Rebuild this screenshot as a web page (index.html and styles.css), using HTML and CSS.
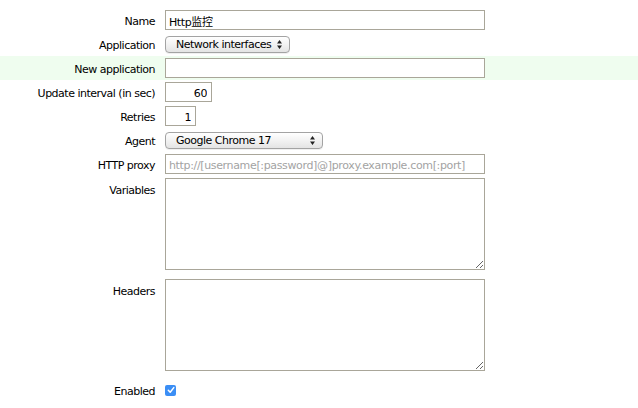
FILE: index.html
```html
<!DOCTYPE html>
<html>
<head>
<meta charset="utf-8">
<link rel="stylesheet" href="styles.css">
</head>
<body>
<div class="form">
  <div class="row">
    <label class="lbl">Name</label>
    <div class="field"><input class="text wide" type="text" value="Http监控"></div>
  </div>
  <div class="row">
    <label class="lbl">Application</label>
    <div class="field">
      <span class="select sel-app"><span class="sel-text">Network interfaces</span>
        <svg class="arrows" width="5" height="9" viewBox="0 0 5 9"><path d="M0 3.5 L2.5 0 L5 3.5 Z M0 5.5 L2.5 9 L5 5.5 Z" fill="#222"/></svg>
      </span>
    </div>
  </div>
  <div class="row hl">
    <label class="lbl">New application</label>
    <div class="field"><input class="text wide" type="text" value=""></div>
  </div>
  <div class="row">
    <label class="lbl">Update interval (in sec)</label>
    <div class="field"><input class="text num interval" type="text" value="60"></div>
  </div>
  <div class="row">
    <label class="lbl">Retries</label>
    <div class="field"><input class="text num retries" type="text" value="1"></div>
  </div>
  <div class="row">
    <label class="lbl">Agent</label>
    <div class="field">
      <span class="select sel-agent"><span class="sel-text">Google Chrome 17</span>
        <svg class="arrows" width="5" height="9" viewBox="0 0 5 9"><path d="M0 3.5 L2.5 0 L5 3.5 Z M0 5.5 L2.5 9 L5 5.5 Z" fill="#222"/></svg>
      </span>
    </div>
  </div>
  <div class="row">
    <label class="lbl">HTTP proxy</label>
    <div class="field"><input class="text wide proxy" type="text" placeholder="http://[username[:password]@]proxy.example.com[:port]"></div>
  </div>
  <div class="row tall">
    <label class="lbl">Variables</label>
    <div class="field"><textarea class="area"></textarea></div>
  </div>
  <div class="row tall">
    <label class="lbl">Headers</label>
    <div class="field"><textarea class="area"></textarea></div>
  </div>
  <div class="row">
    <label class="lbl">Enabled</label>
    <div class="field">
      <span class="check"><svg width="10" height="10" viewBox="0 0 10 10"><path d="M2.3 5.2 L4.2 7.2 L7.8 2.6" fill="none" stroke="#fff" stroke-width="1.5" stroke-linecap="round" stroke-linejoin="round"/></svg></span>
    </div>
  </div>
</div>
</body>
</html>
```
FILE: styles.css
```css
html, body {
  margin: 0;
  padding: 0;
  background: #fff;
}
body {
  font-family: "DejaVu Sans", Verdana, sans-serif;
  font-size: 11px;
  letter-spacing: -0.5px;
  color: #000;
}
.form {
  display: flex;
  flex-direction: column;
  padding-top: 8px;
}
.row {
  display: grid;
  grid-template-columns: 155px 1fr;
  column-gap: 10px;
  height: 24px;
  align-items: center;
}
.row.hl {
  background: #effdef;
}
.row.tall {
  height: 101px;
  align-items: start;
}
.lbl {
  text-align: right;
  white-space: nowrap;
  padding-top: 3px;
}
.row.tall .lbl {
  line-height: 24px;
  padding-top: 3px;
}
.row.tall .field {
  padding-top: 2px;
}
.field {
  display: flex;
  align-items: center;
}
.text {
  box-sizing: border-box;
  height: 20px;
  margin: 0;
  border: 1px solid #a9a699;
  padding: 2px 3px 0 3px;
  font-family: "DejaVu Sans", "Noto Sans CJK SC", sans-serif;
  font-size: 11px;
  letter-spacing: -0.4px;
  color: #000;
  background: #fff;
  outline: none;
}
.proxy { letter-spacing: -0.35px; }
.text::placeholder {
  color: #a3a3a3;
}
.wide { width: 320px; }
.num { text-align: right; padding-right: 4px; }
.interval { width: 47px; }
.retries { width: 31px; }
.select {
  box-sizing: border-box;
  height: 17px;
  display: flex;
  align-items: center;
  justify-content: space-between;
  padding: 1px 7px 0 10px;
  border: 1px solid #a3a3a3;
  border-radius: 4px;
  background: linear-gradient(#ffffff, #f2f2f2 50%, #e4e4e4);
  box-shadow: 0 1px 0 rgba(0,0,0,0.06);
}
.sel-app { width: 125px; }
.sel-agent { width: 158px; }
.sel-text { white-space: nowrap; }
.arrows { margin-top: -1px; }
.area {
  box-sizing: border-box;
  width: 320px;
  height: 92px;
  margin: 0;
  border: 1px solid #a9a699;
  padding: 2px;
  resize: both;
  font-family: "DejaVu Sans", sans-serif;
  font-size: 11px;
  outline: none;
}
.check {
  width: 11px;
  height: 11px;
  border-radius: 2px;
  background: #3b8ef5;
  display: flex;
  align-items: center;
  justify-content: center;
}
.check svg { display: block; }
```
